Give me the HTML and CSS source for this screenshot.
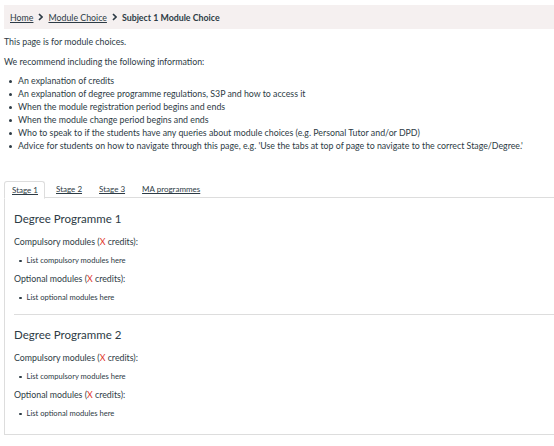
FILE: index.html
```html
<!DOCTYPE html>
<html>
<head>
<meta charset="utf-8">
<link rel="stylesheet" href="styles.css">
</head>
<body>
<nav class="crumbs">
  <a href="#">Home</a>
  <svg class="sep" viewBox="0 0 5 8" width="5" height="8"><path d="M1 1 L4 4 L1 7" fill="none" stroke="#2d3b45" stroke-width="1.6"/></svg>
  <a href="#">Module Choice</a>
  <svg class="sep" viewBox="0 0 5 8" width="5" height="8"><path d="M1 1 L4 4 L1 7" fill="none" stroke="#2d3b45" stroke-width="1.6"/></svg>
  <strong>Subject 1 Module Choice</strong>
</nav>
<p class="intro first">This page is for module choices.</p>
<p class="intro second">We recommend including the following information:</p>
<ul class="info">
  <li>An explanation of credits</li>
  <li>An explanation of degree programme regulations, S3P and how to access it</li>
  <li>When the module registration period begins and ends</li>
  <li>When the module change period begins and ends</li>
  <li>Who to speak to if the students have any queries about module choices (e.g. Personal Tutor and/or DPD)</li>
  <li>Advice for students on how to navigate through this page, e.g. 'Use the tabs at top of page to navigate to the correct Stage/Degree.'</li>
</ul>
<div class="tabs">
  <div class="tablist">
    <a class="tab active" href="#">Stage 1</a>
    <a class="tab" href="#">Stage 2</a>
    <a class="tab" href="#">Stage 3</a>
    <a class="tab" href="#">MA programmes</a>
  </div>
  <div class="panel">
    <section class="prog">
      <h2>Degree Programme 1</h2>
      <p class="mod">Compulsory modules (<span class="x">X</span> credits):</p>
      <ul class="list"><li>List compulsory modules here</li></ul>
      <p class="mod">Optional modules (<span class="x">X</span> credits):</p>
      <ul class="list"><li>List optional modules here</li></ul>
    </section>
    <hr class="div">
    <section class="prog">
      <h2>Degree Programme 2</h2>
      <p class="mod">Compulsory modules (<span class="x">X</span> credits):</p>
      <ul class="list"><li>List compulsory modules here</li></ul>
      <p class="mod">Optional modules (<span class="x">X</span> credits):</p>
      <ul class="list"><li>List optional modules here</li></ul>
    </section>
  </div>
</div>
</body>
</html>
```
FILE: styles.css
```css
* { box-sizing: border-box; }
html, body { margin: 0; padding: 0; background: #fff; }
body {
  padding: 5px 0 0 4px;
  font-family: Lato, "Open Sans", sans-serif;
  color: #2d3b45;
  font-size: 8.8px;
  overflow: hidden;
}
.crumbs {
  background: #f5f0f0;
  height: 24px;
  display: flex;
  align-items: center;
  gap: 5px;
  padding-left: 6px;
  font-size: 8.8px;
}
.crumbs a { color: #2d3b45; text-decoration: underline; }
.crumbs .sep { display: block; }
.crumbs strong { font-weight: bold; }
.intro { margin: 0; line-height: 13px; }
.intro.first { margin-top: 6px; }
.intro.second { margin-top: 7px; }
.info {
  margin: 6px 0 0 0;
  padding: 0;
  list-style: none;
  line-height: 13px;
}
.info li, .list li { display: flex; align-items: center; }
.info li::before {
  content: "";
  flex: none;
  width: 3px;
  height: 3px;
  border-radius: 50%;
  background: currentColor;
  margin: 1px 6px 0 5px;
}
.tabs { margin-top: 29px; }
.tablist {
  display: flex;
  height: 17px;
  border-bottom: 1px solid #ddd;
  font-size: 8px;
}
.tab {
  color: #2d3b45;
  text-decoration: underline;
  padding: 0 8px 0 9px;
  line-height: 17px;
}
.tab.active {
  border: 1px solid #ddd;
  border-bottom: 1px solid #fff;
  border-radius: 3px 3px 0 0;
  height: 18px;
  margin-bottom: -1px;
  background: #fff;
  line-height: 16px;
  padding: 0 6px 0 7px;
  margin-right: 2px;
}
.panel {
  border-left: 1px solid #ddd;
  border-bottom: 1px solid #ddd;
  padding: 10px 0 15px 9px;
}
.prog h2 {
  font-size: 11.5px;
  font-weight: normal;
  margin: 0;
  line-height: 21px;
}
.mod { margin: 6px 0 0 0; line-height: 13px; }
.list {
  margin: 7px 0 0 0;
  padding: 0;
  list-style: none;
  font-size: 7.6px;
  line-height: 11px;
}
.list li::before {
  content: "";
  flex: none;
  width: 2.5px;
  height: 2.5px;
  border-radius: 50%;
  background: currentColor;
  margin: 1px 5px 0 5px;
}
.x { color: #e0311f; }
.div {
  border: 0;
  border-top: 1px solid #ddd;
  margin: 11px 0 9px 0;
}
```
